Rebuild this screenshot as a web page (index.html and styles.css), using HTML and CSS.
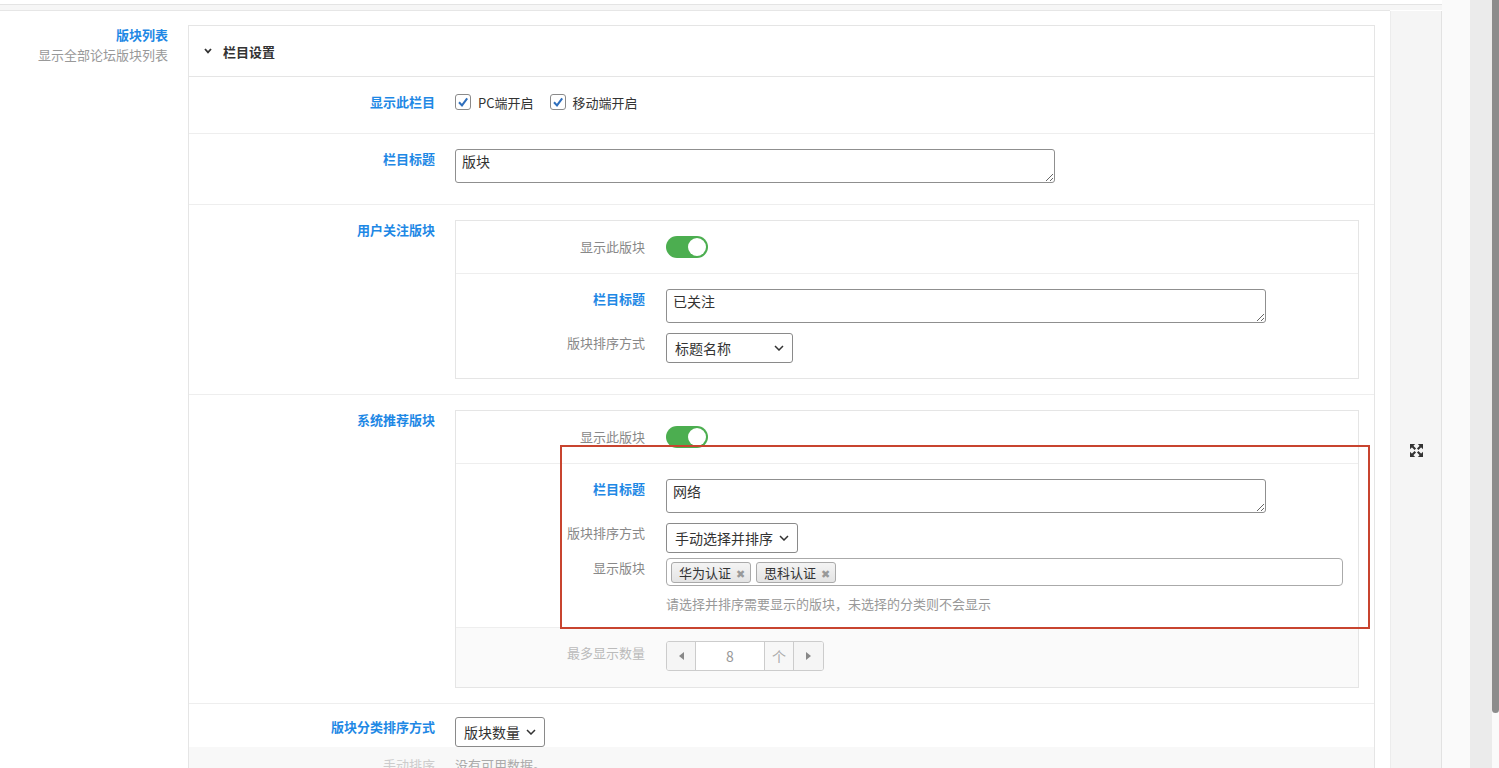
FILE: index.html
```html
<!DOCTYPE html>
<html lang="zh-CN">
<head>
    <meta charset="UTF-8">
    <meta name="viewport" content="width=device-width, initial-scale=1.0">
    <title>栏目设置</title>
    <link rel="stylesheet" href="styles.css">
</head>
<body>
<div class="screen">
    <div class="workspace">
        <div class="prev-card"></div>
        <div class="band"></div>
        <div class="card">
            <div class="editor">
                <div class="intro">
                    <div class="intro-title">版块列表</div>
                    <div class="intro-desc">显示全部论坛版块列表</div>
                </div>

                <div class="panel">
                    <div class="panel-head">
                        <svg class="caret" width="8" height="6" viewBox="0 0 8 6"><polyline points="1,1 4,4.3 7,1" fill="none" stroke="#333" stroke-width="1.8"/></svg>
                        栏目设置
                    </div>

                    <!-- 显示此栏目 -->
                    <div class="row">
                        <div class="row-label">显示此栏目</div>
                        <div class="row-body">
                            <div class="checks">
                                <label class="check">
                                    <span class="box"><svg width="14" height="14" viewBox="0 0 14 14"><path d="M3 7.2l3 3.2 5.2-7" fill="none" stroke="#2f6fbd" stroke-width="2"/></svg></span>
                                    PC端开启
                                </label>
                                <label class="check">
                                    <span class="box"><svg width="14" height="14" viewBox="0 0 14 14"><path d="M3 7.2l3 3.2 5.2-7" fill="none" stroke="#2f6fbd" stroke-width="2"/></svg></span>
                                    移动端开启
                                </label>
                            </div>
                        </div>
                    </div>

                    <!-- 栏目标题 -->
                    <div class="row">
                        <div class="row-label">栏目标题</div>
                        <div class="row-body">
                            <textarea class="text">版块</textarea>
                        </div>
                    </div>

                    <!-- 用户关注版块 -->
                    <div class="row">
                        <div class="row-label">用户关注版块</div>
                        <div class="row-body">
                            <div class="subbox">
                                <div class="nrow">
                                    <div class="nlabel tall">显示此版块</div>
                                    <span class="toggle"><span class="knob"></span></span>
                                </div>
                                <div class="nrow nrow-last">
                                    <div class="nfields">
                                        <div class="field">
                                            <div class="nlabel blue">栏目标题</div>
                                            <textarea class="text">已关注</textarea>
                                        </div>
                                        <div class="field">
                                            <div class="nlabel">版块排序方式</div>
                                            <div class="select select-title">标题名称
                                                <svg width="10" height="6" viewBox="0 0 10 6"><polyline points="1,1 5,5 9,1" fill="none" stroke="#333" stroke-width="1.5"/></svg>
                                            </div>
                                        </div>
                                    </div>
                                </div>
                            </div>
                        </div>
                    </div>

                    <!-- 系统推荐版块 -->
                    <div class="row">
                        <div class="row-label">系统推荐版块</div>
                        <div class="row-body">
                            <div class="subbox">
                                <div class="nrow">
                                    <div class="nlabel tall">显示此版块</div>
                                    <span class="toggle"><span class="knob"></span></span>
                                </div>
                                <div class="nrow">
                                    <div class="nfields">
                                        <div class="field">
                                            <div class="nlabel blue">栏目标题</div>
                                            <textarea class="text">网络</textarea>
                                        </div>
                                        <div class="field">
                                            <div class="nlabel">版块排序方式</div>
                                            <div class="select select-manual">手动选择并排序
                                                <svg width="10" height="6" viewBox="0 0 10 6"><polyline points="1,1 5,5 9,1" fill="none" stroke="#333" stroke-width="1.5"/></svg>
                                            </div>
                                        </div>
                                        <div class="field field-tight">
                                            <div class="nlabel">显示版块</div>
                                            <div>
                                                <div class="tags">
                                                    <span class="tag">华为认证<span class="tag-x">✖</span></span>
                                                    <span class="tag">思科认证<span class="tag-x">✖</span></span>
                                                </div>
                                                <div class="help">请选择并排序需要显示的版块，未选择的分类则不会显示</div>
                                            </div>
                                        </div>
                                    </div>
                                </div>
                                <div class="nrow nrow-last nrow-muted">
                                    <div class="nlabel muted">最多显示数量</div>
                                    <div class="spinner">
                                        <span class="spin-btn"><svg width="5" height="8" viewBox="0 0 5 8"><path d="M5 0v8L0 4z" fill="#888"/></svg></span>
                                        <span class="spin-value">8</span>
                                        <span class="spin-unit">个</span>
                                        <span class="spin-btn spin-btn-last"><svg width="5" height="8" viewBox="0 0 5 8"><path d="M0 0v8l5-4z" fill="#888"/></svg></span>
                                    </div>
                                </div>
                            </div>
                        </div>
                    </div>

                    <!-- 版块分类排序方式 -->
                    <div class="row row-open">
                        <div class="row-label">版块分类排序方式</div>
                        <div class="row-body">
                            <div class="select select-count">版块数量
                                <svg width="10" height="6" viewBox="0 0 10 6"><polyline points="1,1 5,5 9,1" fill="none" stroke="#333" stroke-width="1.5"/></svg>
                            </div>
                        </div>
                    </div>

                    <div class="row row-muted">
                        <div class="row-label muted">手动排序</div>
                        <div class="row-body empty">没有可用数据。</div>
                    </div>
                </div>
            </div>

            <div class="side">
                <svg class="expand" width="13" height="13" viewBox="0 0 14 14">
                    <g fill="#333">
                        <path d="M0 0h5.6L0 5.6z"/>
                        <path d="M14 0v5.6L8.4 0z"/>
                        <path d="M0 14V8.4L5.6 14z"/>
                        <path d="M14 14H8.4L14 8.4z"/>
                    </g>
                    <path d="M2.5 2.5l3.2 3.2M11.5 2.5L8.3 5.7M2.5 11.5l3.2-3.2M11.5 11.5L8.3 8.3" stroke="#333" stroke-width="2.3"/>
                </svg>
            </div>
        </div>
    </div>
    <div class="gutter"></div>
    <div class="track"></div>
    <div class="scrollbar"><div class="thumb"></div></div>

    <div class="highlight"></div>
</div>
</body>
</html>
```

FILE: styles.css
```css
* {
    box-sizing: border-box;
}

html, body {
    margin: 0;
    height: 768px;
    overflow: hidden;
}

body {
    background-color: #ffffff;
    color: #333333;
    font-family: "Noto Sans CJK SC", "Noto Sans", sans-serif;
    font-size: 13px;
}

.screen {
    position: relative;
    display: flex;
    height: 768px;
}

.workspace {
    width: 1442px;
    display: flex;
    flex-direction: column;
    overflow: hidden;
}

.prev-card {
    height: 5px;
    flex-shrink: 0;
    border-bottom: 1px solid #e4e4e4;
}

.band {
    height: 5px;
    flex-shrink: 0;
    background-color: #f6f6f6;
}

.card {
    flex: 1;
    min-height: 0;
    display: flex;
    align-items: stretch;
}

.editor {
    width: 1390px;
    border-top: 1px solid #e6e6e6;
    padding: 14px 15px 0 0;
    display: flex;
    align-items: flex-start;
}

.side {
    width: 52px;
    margin-top: 1px;
    padding-top: 431px;
    background-color: #f5f5f5;
    border-left: 1px solid #ececec;
    border-right: 1px solid #e2e2e2;
    text-align: center;
}

.expand {
    display: inline-block;
}

.gutter {
    width: 28px;
    background-color: #fafafa;
}

.track {
    width: 22px;
    background-color: #ebebeb;
}

.scrollbar {
    width: 7px;
    background-color: #fafafa;
}

.thumb {
    height: 713px;
    background-color: #8c8c8c;
    border-radius: 0 0 4px 4px;
}

.highlight {
    position: absolute;
    left: 560px;
    top: 445px;
    width: 810px;
    height: 184px;
    border: 2px solid #c8442f;
    pointer-events: none;
}

/* left intro */
.intro {
    width: 168px;
    margin-right: 20px;
    text-align: right;
    line-height: 20px;
    flex-shrink: 0;
}

.intro-title {
    color: #1e88e5;
    font-weight: bold;
}

.intro-desc {
    color: #999999;
}

/* panel */
.panel {
    width: 1187px;
    border: 1px solid #e5e5e5;
    border-bottom: none;
}

.panel-head {
    height: 51px;
    padding-left: 15px;
    border-bottom: 1px solid #e5e5e5;
    display: flex;
    align-items: center;
    gap: 11px;
    font-weight: bold;
    color: #333333;
}

.row {
    display: flex;
    padding: 15px 0;
    border-bottom: 1px solid #eeeeee;
}

.row-open {
    padding: 13px 0 0;
    border-bottom: none;
}

.row-muted {
    padding: 8px 0 10px;
    background-color: #f8f8f8;
    border-bottom: none;
}

.row-label {
    width: 246px;
    margin-right: 20px;
    flex-shrink: 0;
    text-align: right;
    line-height: 20px;
    font-weight: bold;
    color: #1e88e5;
}

.row-label.muted {
    font-weight: normal;
    color: #cccccc;
}

.row-body {
    flex: 1;
    min-width: 0;
}

.empty {
    line-height: 20px;
    color: #aaaaaa;
}

/* checkboxes */
.checks {
    height: 26px;
    display: flex;
    align-items: flex-start;
    gap: 16px;
}

.check {
    display: flex;
    align-items: center;
    gap: 7px;
    height: 20px;
    color: #333333;
}

.box {
    width: 16px;
    height: 16px;
    border: 1px solid #8a8a8a;
    border-radius: 3px;
    background-color: #ffffff;
    display: flex;
    align-items: center;
    justify-content: center;
}

/* inputs */
.text {
    display: block;
    width: 600px;
    height: 34px;
    margin: 0 0 6px;
    padding: 1px 6px;
    border: 1px solid #8f8f8f;
    border-radius: 3px;
    font-family: "Noto Sans CJK SC", "Noto Sans", sans-serif;
    font-size: 14px;
    line-height: 20px;
    color: #333333;
    background-color: #ffffff;
}

.field .text {
    margin-bottom: 0;
}

.select {
    height: 30px;
    padding: 0 8px;
    border: 1px solid #8a8a8a;
    border-radius: 3px;
    display: flex;
    align-items: center;
    justify-content: space-between;
    font-size: 14px;
    color: #333333;
    background-color: #ffffff;
}

.select-title {
    width: 127px;
}

.select-manual {
    width: 132px;
}

.select-count {
    width: 90px;
}

/* nested box */
.subbox {
    width: 904px;
    border: 1px solid #e5e5e5;
}

.nrow {
    display: flex;
    padding: 15px 0;
    border-bottom: 1px solid #eeeeee;
}

.nrow-last {
    border-bottom: none;
}

.nrow-muted {
    padding: 13px 0 16px;
    background-color: #fafafa;
}

.nfields {
    flex: 1;
}

.field {
    display: flex;
    align-items: flex-start;
}

.field + .field {
    margin-top: 10px;
}

.field-tight {
    margin-top: 5px !important;
}

.nlabel {
    width: 189px;
    margin-right: 21px;
    flex-shrink: 0;
    text-align: right;
    line-height: 20px;
    color: #888888;
}

.nlabel.tall {
    line-height: 22px;
}

.nlabel.blue {
    color: #1e88e5;
    font-weight: bold;
}

.nlabel.muted {
    line-height: 24px;
    color: #bbbbbb;
}

.toggle {
    position: relative;
    width: 42px;
    height: 22px;
    border-radius: 11px;
    background-color: #4cae50;
}

.knob {
    position: absolute;
    top: 2px;
    right: 2px;
    width: 18px;
    height: 18px;
    border-radius: 50%;
    background-color: #ffffff;
}

/* tags */
.tags {
    width: 677px;
    height: 28px;
    padding: 3px 4px;
    border: 1px solid #aaaaaa;
    border-radius: 4px;
    display: flex;
    gap: 5px;
}

.tag {
    height: 21px;
    padding: 0 5px 0 7px;
    border: 1px solid #aaaaaa;
    border-radius: 3px;
    background: linear-gradient(#f4f4f4, #e4e4e4);
    display: flex;
    align-items: center;
    gap: 5px;
    font-size: 13px;
    color: #333333;
}

.tag-x {
    font-size: 11px;
    color: #999999;
}

.help {
    margin-top: 10px;
    line-height: 16px;
    color: #999999;
}

/* number spinner */
.spinner {
    display: flex;
    height: 30px;
    border: 1px solid #cccccc;
    border-radius: 3px;
    overflow: hidden;
    background-color: #ffffff;
}

.spin-btn {
    width: 29px;
    background-color: #f5f5f5;
    border-right: 1px solid #cccccc;
    display: flex;
    align-items: center;
    justify-content: center;
}

.spin-btn-last {
    border-right: none;
}

.spin-value {
    width: 69px;
    border-right: 1px solid #cccccc;
    text-align: center;
    line-height: 28px;
    font-size: 14px;
    color: #999999;
}

.spin-unit {
    width: 29px;
    border-right: 1px solid #cccccc;
    background-color: #f7f7f7;
    text-align: center;
    line-height: 28px;
    font-size: 14px;
    color: #aaaaaa;
}
```
